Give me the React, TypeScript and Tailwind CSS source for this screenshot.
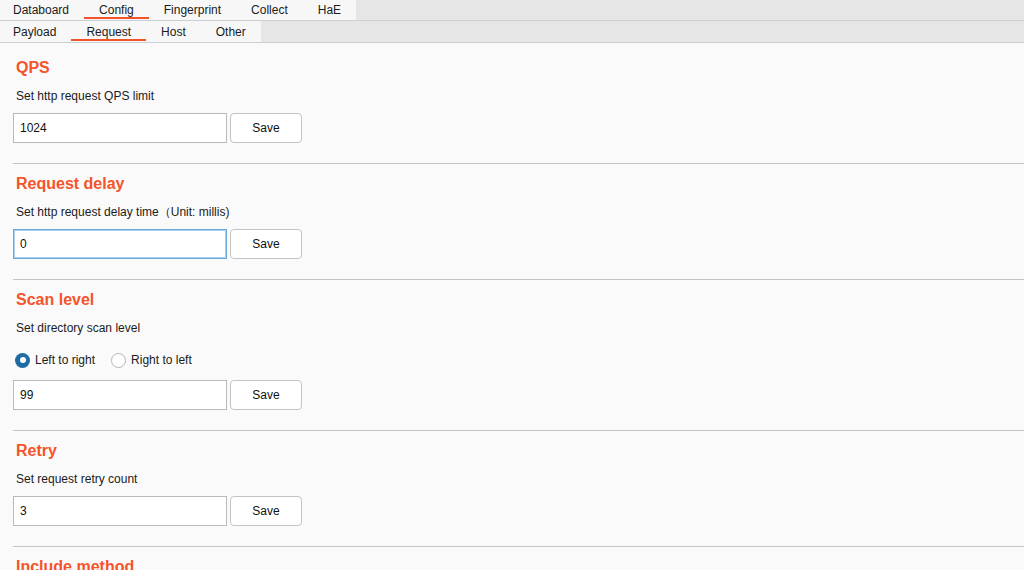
const topTabs = ["Databoard", "Config", "Fingerprint", "Collect", "HaE"];
const subTabs = ["Payload", "Request", "Host", "Other"];

function TabRow({ tabs, active, h }: { tabs: string[]; active: string; h: string }) {
  return (
    <div className={`flex ${h} bg-[#e6e6e6] border-b border-[#c9d0d5]`}>
      <div className="flex bg-[#f7f7f7]">
        {tabs.map((t, i) => (
          <div
            key={t}
            className={`relative flex items-center ${i === 0 ? "pl-[13px] pr-[15px]" : "px-[15px]"} text-[12px] text-[#1b1b1b]`}
          >
            {t}
            {t === active && <div className="absolute left-0 right-0 bottom-[1px] h-[2px] bg-[#f1542a]" />}
          </div>
        ))}
      </div>
    </div>
  );
}

function Field({ value, focused }: { value: string; focused?: boolean }) {
  return (
    <div className="flex gap-[3px] items-center ml-[13px]">
      <div
        className={`w-[214px] h-[30px] bg-white flex items-center px-[6px] text-[12px] text-[#111] ${
          focused ? "border border-[#6fa8dc] shadow-[inset_0_0_0_1px_#a9cdee]" : "border border-[#bdb8b8]"
        }`}
      >
        {value}
      </div>
      <button className="w-[72px] h-[30px] bg-white border border-[#c3c3c3] rounded-[4px] text-[12px] text-[#111]">
        Save
      </button>
    </div>
  );
}

function Section({
  title,
  desc,
  value,
  focused,
  children,
  first,
}: {
  title: string;
  desc: string;
  value?: string;
  focused?: boolean;
  children?: React.ReactNode;
  first?: boolean;
}) {
  return (
    <div className={first ? "pt-[14px]" : "pt-[9px]"}>
      <div className="ml-[16px] h-[22px] leading-[22px] text-[16px] font-bold text-[#f5532a]">{title}</div>
      {desc && <div className="ml-[16px] mt-[9px] h-[16px] leading-[16px] text-[12px] text-[#1b1b1b]">{desc}</div>}
      {children}
      {value !== undefined && (
        <div className={children ? "mt-[12px]" : "mt-[9px]"}>
          <Field value={value} focused={focused} />
        </div>
      )}
      {value !== undefined && <div className="mt-[20px] ml-[13px] h-px bg-[#c4c4c4]" />}
    </div>
  );
}

function Radio({ checked, label }: { checked?: boolean; label: string }) {
  return (
    <div className="flex items-center gap-[5px]">
      {checked ? (
        <div className="w-[15px] h-[15px] rounded-full bg-[#1f6ca5] flex items-center justify-center">
          <div className="w-[6px] h-[6px] rounded-full bg-white" />
        </div>
      ) : (
        <div className="w-[15px] h-[15px] rounded-full bg-white border border-[#b5b5b5]" />
      )}
      <span className="text-[12px] text-[#1b1b1b]">{label}</span>
    </div>
  );
}

export default function App() {
  return (
    <div className="w-[1024px] h-[570px] overflow-hidden bg-[#fafafa] font-['Liberation_Sans',Arial,sans-serif]">
      <TabRow tabs={topTabs} active="Config" h="h-[21px]" />
      <TabRow tabs={subTabs} active="Request" h="h-[22px]" />
      <Section first title="QPS" desc="Set http request QPS limit" value="1024" />
      <Section title="Request delay" desc="Set http request delay time（Unit: millis)" value="0" focused />
      <Section title="Scan level" desc="Set directory scan level" value="99">
        <div className="ml-[15px] mt-[16px] h-[16px] flex items-center gap-[16px]">
          <Radio checked label="Left to right" />
          <Radio label="Right to left" />
        </div>
      </Section>
      <Section title="Retry" desc="Set request retry count" value="3" />
      <Section title="Include method" desc="" />
    </div>
  );
}
